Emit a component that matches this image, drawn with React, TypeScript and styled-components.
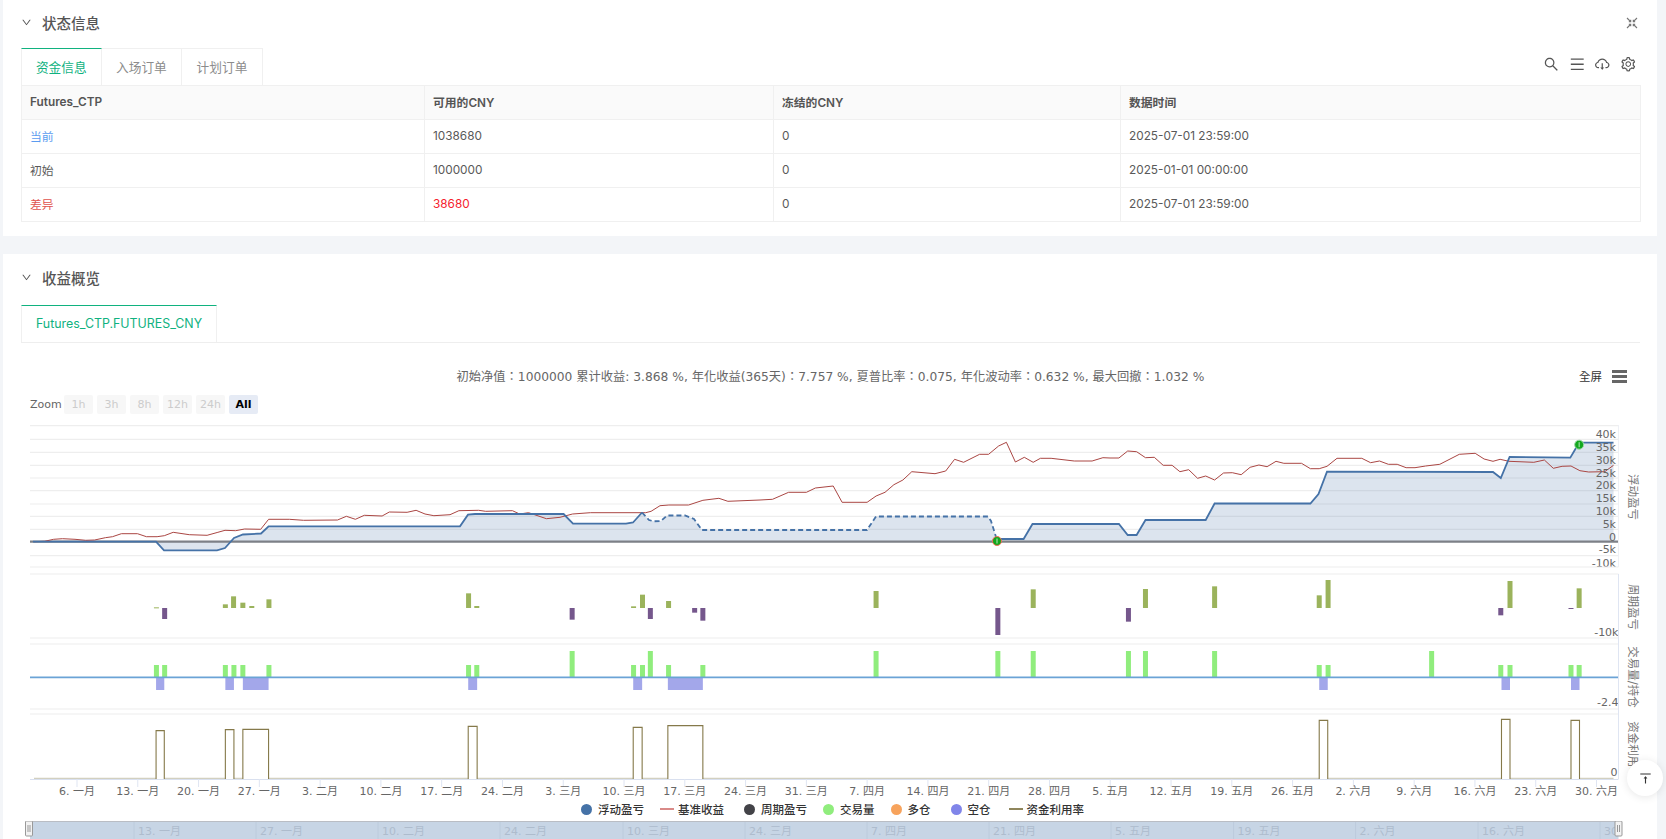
import styled, { createGlobalStyle } from 'styled-components';
import {
  AiOutlineCloudDownload,
  AiOutlineDown,
  AiOutlineMenu,
  AiOutlineSearch,
  AiOutlineSetting,
  AiOutlineVerticalAlignTop,
} from 'react-icons/ai';

const CHART_FONT = '"DejaVu Sans", "Noto Sans CJK SC", sans-serif';

const GlobalStyle = createGlobalStyle`
  html, body {
    margin: 0;
    height: 839px;
    overflow: hidden;
    background: #f3f5f8;
    font-family: Inter, "Noto Sans CJK SC", sans-serif;
    color: #555;
  }
`;

const Page = styled.div`
  display: flex;
  flex-direction: column;
  gap: 18px;
  padding: 0 9px 0 3px;
`;

const Panel = styled.section<{ $height: number }>`
  height: ${(p) => p.$height}px;
  background: #fff;
  padding: 0 17px 0 18px;
  overflow: hidden;
`;

const PanelHeader = styled.header<{ $height: number; $pad: number }>`
  height: ${(p) => p.$height}px;
  display: flex;
  align-items: center;
  padding-bottom: ${(p) => p.$pad}px;
  box-sizing: border-box;
`;

const Chevron = styled(AiOutlineDown)`
  font-size: 11px;
  color: #555;
  margin: 0 10px 0 0;
`;

const PanelTitle = styled.h2`
  margin: 0;
  font-size: 14.5px;
  font-weight: 500;
  color: #555;
  flex: 1;
`;

const TabRow = styled.div<{ $line?: boolean }>`
  display: flex;
  align-items: stretch;
  height: 37px;
  box-sizing: border-box;
  ${(p) => p.$line && 'border-bottom: 1px solid #eee; height: 38px;'}
`;

const Tab = styled.div<{ $active?: boolean; $wide?: boolean }>`
  width: ${(p) => (p.$wide ? 196 : 80.6)}px;
  box-sizing: border-box;
  display: flex;
  align-items: center;
  justify-content: center;
  padding-bottom: 2px;
  font-size: ${(p) => (p.$wide ? 12.4 : 12.7)}px;
  color: ${(p) => (p.$active ? '#10b27f' : '#8c8c8c')};
  border: 1px solid #f0f0f0;
  border-left-width: ${(p) => (p.$active ? 1 : 0)}px;
  border-bottom: 0;
  border-top: ${(p) => (p.$active ? '1px solid #10b27f' : '1px solid #f0f0f0')};
`;

const TabTools = styled.div`
  margin-left: auto;
  display: flex;
  align-items: center;
  gap: 9px;
  padding: 0 4px 5px 0;
  font-size: 16.5px;
  color: #555;
`;

const Table = styled.table`
  width: 1619px;
  border-collapse: collapse;
  table-layout: fixed;
  font-size: 11.8px;
  color: #595959;
`;

const Th = styled.th<{ $width: number }>`
  width: ${(p) => p.$width}px;
  height: 34px;
  padding: 0 8px 2px;
  box-sizing: border-box;
  background: #fafafa;
  border: 1px solid #f0f0f0;
  text-align: left;
  font-weight: 600;
  color: #555;
`;

const Td = styled.td<{ $tone?: string }>`
  height: 34px;
  padding: 0 8px 2px;
  box-sizing: border-box;
  border: 1px solid #f0f0f0;
  color: ${(p) => p.$tone ?? '#595959'};
`;

const CornerTool = styled.span`
  display: flex;
  margin-right: 2px;
`;

const ChartTop = styled.div`
  position: relative;
  height: 50px;
  display: flex;
  align-items: center;
  justify-content: center;
  padding-top: 16px;
  box-sizing: border-box;
  font-family: "DejaVu Sans", "Noto Sans CJK TC", sans-serif;
  font-size: 12.25px;
  color: #666;
  white-space: nowrap;
`;

const FullButton = styled.div`
  position: absolute;
  right: 13px;
  top: 25px;
  display: flex;
  align-items: center;
  gap: 10px;
  font-size: 11.5px;
  color: #333;
`;

const Hamburger = styled.span`
  display: flex;
  flex-direction: column;
  gap: 2px;
  width: 15px;
  & > i {
    height: 3px;
    background: #666;
  }
`;

const RangeRow = styled.div`
  height: 27px;
  display: flex;
  align-items: center;
  gap: 4px;
  padding: 0 0 4px 9px;
  box-sizing: border-box;
  font-family: ${CHART_FONT};
  font-size: 11px;
  color: #666;
`;

const RangeLabel = styled.span`
  width: 30px;
`;

const RangeButton = styled.span<{ $active?: boolean }>`
  width: 29px;
  height: 19px;
  display: flex;
  align-items: center;
  justify-content: center;
  background: ${(p) => (p.$active ? '#e6ebf5' : '#f7f7f7')};
  color: ${(p) => (p.$active ? '#000' : '#ccc')};
  font-weight: ${(p) => (p.$active ? 600 : 400)};
  border-radius: 2px;
`;

const Plot = styled.svg`
  display: block;
  width: 1619px;
  height: 380px;
  font-family: ${CHART_FONT};
`;

const Legend = styled.div`
  height: 21px;
  display: flex;
  align-items: center;
  padding: 0 0 3px 560px;
  box-sizing: border-box;
  font-size: 11.5px;
  font-weight: 500;
  color: #333;
`;

const LegendItem = styled.span<{ $gap: number }>`
  display: flex;
  align-items: center;
  gap: 6px;
  margin-right: ${(p) => p.$gap}px;
`;

const LegendDot = styled.i<{ $color: string }>`
  width: 11px;
  height: 11px;
  border-radius: 50%;
  background: ${(p) => p.$color};
`;

const LegendLine = styled.i<{ $color: string }>`
  width: 14px;
  height: 1.5px;
  margin-right: -2px;
  background: ${(p) => p.$color};
`;

const Navigator = styled.svg`
  display: block;
  width: 1619px;
  height: 18px;
  font-family: ${CHART_FONT};
`;

const BackTop = styled.button`
  position: fixed;
  left: 1627px;
  top: 760px;
  width: 36px;
  height: 36px;
  border: 0;
  padding: 0;
  border-radius: 50%;
  background: #fff;
  box-shadow: 0 1px 8px rgba(0, 0, 0, 0.1);
  display: flex;
  align-items: center;
  justify-content: center;
  font-size: 15px;
  color: #333;
`;

const FullscreenIcon = () => (
  <svg width="12" height="12" viewBox="0 0 12 12" fill="none" stroke="#777" strokeWidth="1.1">
    <path d="M1 1 L4.5 4.5 M2.8 4.7 H4.7 V2.8" />
    <path d="M11 1 L7.5 4.5 M7.3 2.8 V4.7 H9.2" />
    <path d="M1 11 L4.5 7.5 M2.8 7.3 H4.7 V9.2" />
    <path d="M11 11 L7.5 7.5 M9.2 7.3 H7.3 V9.2" />
  </svg>
);

// zoom crops were read at 2.8x across (2.82x for the right hand ones) and 3x down
type Raw = [number, number][];
const crop = (ox: number, oy: number, sx = 2.8) => (pts: Raw): Raw =>
  pts.map(([x, y]) => [ox + x / sx, oy + y / 3]);
const cropRight = (oy: number) => crop(1110, oy, 2.82);
const rightX = (x: number) => 1110 + x / 2.82;
const path = (pts: Raw) => pts.map(([x, y], i) => `${i ? 'L' : 'M'}${x.toFixed(1)} ${y.toFixed(1)}`).join(' ');

const ZERO = 541.7;
const RIGHT = 1618.5;
const LINE_END = rightX(1420);

const solidA: Raw = [
  [33, ZERO], [156, ZERO], [164, 550.3], [217, 550.3], [225, 548], [234, 538], [243, 534.5], [261, 533.5],
  [268.6, 526.3], [460, 526.3], [468, 514.7], [475, 514], [563.6, 514], [573, 523.7], [626, 523.7], [633, 522.5], [642, 512.5],
];
const dashed: Raw = [
  [642, 512.5], [649, 520], [653.6, 521.3], [661, 521], [667, 515.5], [685, 515.5], [694, 519], [702, 530],
  [867, 530], [876, 516.5], [988, 516.5], [991, 521], [997, 540],
];
const solidB: Raw = [
  [997, 539], [1023.6, 539], [1032.5, 524],
  ...cropRight(340)([
    [25, 552], [50, 585], [75, 585], [100, 540], [270, 540], [295, 490.5], [565, 490.5], [588, 462], [612, 395],
    [1080, 396], [1102, 414], [1127, 351], [1298, 353], [1323, 308], [1420, 308],
  ]),
];
const equity = [...solidA, ...dashed, ...solidB];

const benchmark: Raw = [
  ...crop(0, 360)([
    [95, 545], [125, 544], [150, 538], [175, 536], [210, 538], [240, 541], [265, 540], [295, 533], [315, 530], [340, 521],
    [385, 521], [410, 530], [440, 530], [460, 527], [485, 517], [530, 524], [580, 526], [610, 517], [630, 511], [660, 512],
    [685, 507], [730, 508], [752, 478], [810, 478], [850, 481], [945, 480], [970, 469], [995, 478], [1020, 466], [1070, 468],
    [1090, 456], [1140, 457], [1165, 451], [1190, 462], [1215, 467], [1260, 464], [1285, 452], [1340, 451], [1360, 454],
    [1435, 452], [1455, 462], [1480, 458], [1530, 476],
  ]),
  ...crop(560, 340)([
    [0, 532], [35, 522], [85, 518], [240, 518], [255, 514], [280, 497], [305, 495], [360, 495], [400, 481], [445, 475], [470, 484],
    [560, 480], [595, 478], [640, 457], [690, 457], [715, 444], [765, 438], [790, 487], [860, 487], [885, 468], [910, 457],
    [935, 434], [960, 420], [985, 395], [1050, 401], [1080, 393], [1105, 358], [1130, 367], [1175, 343], [1200, 343], [1228, 318],
    [1250, 307], [1275, 366], [1300, 352], [1325, 367], [1345, 355], [1375, 355], [1440, 363], [1490, 363], [1520, 353],
  ]),
  ...cropRight(340)([
    [0, 354], [25, 354], [50, 333], [75, 335], [100, 353], [125, 352], [150, 376], [175, 376], [197, 395], [222, 389], [247, 415],
    [270, 408], [295, 420], [320, 399], [345, 398], [370, 404], [395, 382], [420, 375], [443, 380], [468, 364], [490, 370], [540, 370],
    [565, 386], [590, 386], [612, 379], [640, 355], [710, 355], [735, 368], [760, 363], [785, 373], [810, 373], [835, 383], [860, 383],
    [890, 378], [930, 373], [985, 343], [1030, 340], [1055, 357], [1080, 364], [1100, 358], [1125, 364], [1195, 367], [1225, 360],
    [1250, 385], [1275, 379], [1300, 378], [1325, 392], [1350, 396], [1395, 395], [1420, 376],
  ]),
];

const gridY = [425.7, 439.3, 452.3, 465.3, 478, 490.7, 504, 516.3, 529.3, 555.7];
const yLabels: [string, number][] = [
  ['40k', 434.5], ['35k', 447.7], ['30k', 460.5], ['25k', 473.5], ['20k', 486.2], ['15k', 499],
  ['10k', 511.8], ['5k', 524.6], ['0', 537.5], ['-5k', 550.3], ['-10k', 564],
];

// [x, crop y] of the period profit bars
const profitBars: Raw = [
  ...crop(0, 560)([[438, 142], [461, 177], [631, 133], [654, 109], [680, 128], [705, 138], [753, 118], [1312, 100], [1335, 138]]),
  ...crop(560, 560)([[34, 179], [206, 139], [231, 104], [253, 177], [304, 123], [377, 158], [400, 182], [885, 93], [1226, 225], [1325, 88]]),
  ...cropRight(560)([[52, 185], [100, 87], [295, 79], [590, 106], [615, 60], [1102, 166], [1128, 63], [1300, 147], [1323, 85]]),
];

const tradeBars: [number, boolean][] = [
  ...[438, 461, 631, 655, 680, 753, 1312, 1335].map((x): [number, boolean] => [x / 2.8, false]),
  ...[[34, 1], [206, 0], [231, 0], [253, 1], [304, 0], [400, 0], [885, 1], [1226, 1], [1325, 1]].map(
    ([x, t]): [number, boolean] => [560 + x / 2.8, !!t],
  ),
  ...[[52, 1], [100, 1], [295, 1], [590, 0], [615, 0], [907, 1], [1102, 0], [1128, 0], [1300, 0], [1323, 0]].map(
    ([x, t]): [number, boolean] => [rightX(x), !!t],
  ),
];

// left and right of the short position blocks, the usage pulses sit on the same spans
const blocks: [number, number][] = [
  [437 / 2.8, 460 / 2.8], [631 / 2.8, 655 / 2.8], [680 / 2.8, 752 / 2.8], [1311 / 2.8, 1336 / 2.8],
  [560 + 205 / 2.8, 560 + 230 / 2.8], [560 + 302 / 2.8, 560 + 400 / 2.8],
  [rightX(590), rightX(614)], [rightX(1104), rightX(1128)], [rightX(1300), rightX(1324)],
];
const usageTops = [512, 509, 508, 499, 502, 497, 481, 478, 481];

const months = ['一月', '二月', '三月', '四月', '五月', '六月'];
const xTicks: [string, number][] = (
  [
    [6, 0], [13, 0], [20, 0], [27, 0], [3, 1], [10, 1], [17, 1], [24, 1], [3, 2], [10, 2], [17, 2], [24, 2], [31, 2],
    [7, 3], [14, 3], [21, 3], [28, 3], [5, 4], [12, 4], [19, 4], [26, 4], [2, 5], [9, 5], [16, 5], [23, 5], [30, 5],
  ] as [number, number][]
).map(([d, m], i) => [`${d}. ${months[m]}`, 77 + i * 60.78]);

const navLabels: [string, number][] = [
  ['13. 一月', 138], ['27. 一月', 260], ['10. 二月', 382], ['24. 二月', 504], ['10. 三月', 627], ['24. 三月', 749],
  ['7. 四月', 871], ['21. 四月', 993], ['5. 五月', 1115], ['19. 五月', 1237.6], ['2. 六月', 1359.6], ['16. 六月', 1482], ['30', 1604],
];

const rows: { name: string; tone?: string; cash: string; cashTone?: string; time: string }[] = [
  { name: '当前', tone: '#5b9cf0', cash: '1038680', time: '2025-07-01 23:59:00' },
  { name: '初始', cash: '1000000', time: '2025-01-01 00:00:00' },
  { name: '差异', tone: '#e0524d', cash: '38680', cashTone: '#f5222d', time: '2025-07-01 23:59:00' },
];

const Flag = ({ x, y, ring }: { x: number; y: number; ring: string }) => (
  <g>
    <circle cx={x} cy={y} r={4.5} fill="#12a81e" stroke={ring} strokeWidth={1} />
    <path d={`M${x} ${y - 2.5} V${y + 2.5}`} stroke="#cfeecf" strokeWidth={0.9} />
  </g>
);

const AxisTitle = ({ y, children }: { y: number; children: string }) => (
  <text x={1632} y={y} transform={`rotate(90 1632 ${y})`} textAnchor="middle" dominantBaseline="middle" fontSize={11.5} fill="#777">
    {children}
  </text>
);

const Handle = ({ x }: { x: number }) => (
  <g>
    <rect x={x - 3.5} y={821} width={7} height={15} rx={1} fill="#f2f2f2" stroke="#999" />
    <path d={`M${x - 1} 825 V832 M${x + 1} 825 V832`} stroke="#999" />
  </g>
);

const App = () => {
  return (
    <>
      <GlobalStyle />
      <Page>
        <Panel $height={236}>
          <PanelHeader $height={48} $pad={3}>
            <Chevron />
            <PanelTitle>状态信息</PanelTitle>
            <CornerTool>
              <FullscreenIcon />
            </CornerTool>
          </PanelHeader>
          <TabRow>
            <Tab $active>资金信息</Tab>
            <Tab>入场订单</Tab>
            <Tab>计划订单</Tab>
            <TabTools>
              <AiOutlineSearch />
              <AiOutlineMenu />
              <AiOutlineCloudDownload />
              <AiOutlineSetting />
            </TabTools>
          </TabRow>
          <Table>
            <thead>
              <tr>
                <Th $width={403}>Futures_CTP</Th>
                <Th $width={349}>可用的CNY</Th>
                <Th $width={347}>冻结的CNY</Th>
                <Th $width={520}>数据时间</Th>
              </tr>
            </thead>
            <tbody>
              {rows.map((r) => (
                <tr key={r.name}>
                  <Td $tone={r.tone}>{r.name}</Td>
                  <Td $tone={r.cashTone}>{r.cash}</Td>
                  <Td>0</Td>
                  <Td>{r.time}</Td>
                </tr>
              ))}
            </tbody>
          </Table>
        </Panel>
        <Panel $height={585}>
          <PanelHeader $height={51} $pad={5}>
            <Chevron />
            <PanelTitle>收益概览</PanelTitle>
          </PanelHeader>
          <TabRow $line>
            <Tab $active $wide>
              Futures_CTP.FUTURES_CNY
            </Tab>
          </TabRow>
          <ChartTop>
            初始净值：1000000 累计收益: 3.868 %, 年化收益(365天)：7.757 %, 夏普比率：0.075, 年化波动率：0.632 %, 最大回撤：1.032 %
            <FullButton>
              全屏
              <Hamburger>
                <i />
                <i />
                <i />
              </Hamburger>
            </FullButton>
          </ChartTop>
          <RangeRow>
            <RangeLabel>Zoom</RangeLabel>
            {['1h', '3h', '8h', '12h', '24h'].map((r) => (
              <RangeButton key={r}>{r}</RangeButton>
            ))}
            <RangeButton $active>All</RangeButton>
          </RangeRow>
          <Plot viewBox="21 420 1619 380">
            {gridY.map((y) => (
              <line key={y} x1={30} x2={RIGHT} y1={y} y2={y} stroke="#eeeeee" strokeWidth={1.2} />
            ))}
            <path d={`${path(equity)} L${LINE_END} ${ZERO} L33 ${ZERO} Z`} fill="#4572a7" fillOpacity={0.19} />
            <line x1={30} x2={RIGHT} y1={ZERO} y2={ZERO} stroke="#7d8087" strokeWidth={2.2} />
            <path d={path(benchmark)} fill="none" stroke="#aa4643" strokeWidth={1} />
            <path d={path(solidA)} fill="none" stroke="#4572a7" strokeWidth={1.8} />
            <path d={path(dashed)} fill="none" stroke="#4572a7" strokeWidth={1.8} strokeDasharray="5 3" />
            <path d={path(solidB)} fill="none" stroke="#4572a7" strokeWidth={1.8} />
            <Flag x={997} y={541} ring="#f0705a" />
            <Flag x={rightX(1323)} y={444.7} ring="#9ed8a8" />
            {yLabels.map(([t, y]) => (
              <text key={t} x={1616} y={y} textAnchor="end" dominantBaseline="middle" fontSize={11} fill="#666">
                {t}
              </text>
            ))}
            <line x1={RIGHT} x2={RIGHT} y1={425} y2={567} stroke="#eef0f5" />

            <line x1={30} x2={RIGHT} y1={567} y2={567} stroke="#eeeeee" strokeWidth={1.2} />
            <line x1={30} x2={RIGHT} y1={574} y2={574} stroke="#eeeeee" strokeWidth={1.2} />
            {profitBars.map(([x, y]) => {
              const up = y < 608;
              return (
                <rect
                  key={x}
                  x={x - 2.5}
                  width={5}
                  y={up ? y : 608}
                  height={Math.max(Math.abs(y - 608), 1)}
                  fill={up ? '#9bb35c' : '#75578c'}
                />
              );
            })}
            <text x={RIGHT} y={633} textAnchor="end" dominantBaseline="middle" fontSize={11} fill="#666">
              -10k
            </text>
            <line x1={30} x2={RIGHT} y1={638} y2={638} stroke="#eeeeee" strokeWidth={1.2} />
            <line x1={30} x2={RIGHT} y1={644} y2={644} stroke="#eeeeee" strokeWidth={1.2} />
            {tradeBars.map(([x, tall]) => (
              <rect key={x} x={x - 2.5} width={5} y={tall ? 651 : 665} height={tall ? 26 : 12} fill="#90ed7d" />
            ))}
            {blocks.map(([a, b]) => (
              <rect key={a} x={a} width={b - a} y={677} height={13} fill="#a3a7ea" />
            ))}
            <line x1={30} x2={RIGHT} y1={677.3} y2={677.3} stroke="#6ba3d6" strokeWidth={1.8} />
            <text x={RIGHT} y={703} textAnchor="end" dominantBaseline="middle" fontSize={11} fill="#666">
              -2.4
            </text>
            <line x1={30} x2={RIGHT} y1={709} y2={709} stroke="#eeeeee" strokeWidth={1.2} />
            <line x1={30} x2={RIGHT} y1={714} y2={714} stroke="#eeeeee" strokeWidth={1.2} />
            <line x1={34} x2={LINE_END} y1={778.5} y2={778.5} stroke="#d2d0c0" strokeWidth={1.6} />
            {blocks.map(([a, b], i) => {
              const top = 560 + usageTops[i] / 3;
              return (
                <path key={a} d={`M${a} 779 V${top} H${b} V779`} fill="#fff" stroke="#85794a" strokeWidth={1.1} />
              );
            })}
            <text x={RIGHT - 1} y={773} textAnchor="end" dominantBaseline="middle" fontSize={11} fill="#666">
              0
            </text>
            <line x1={RIGHT} x2={RIGHT} y1={574} y2={779} stroke="#dfe5f2" />
            <line x1={30} x2={RIGHT} y1={779.5} y2={779.5} stroke="#d9e0ef" />
            {xTicks.map(([t, x]) => (
              <g key={t}>
                <line x1={x} x2={x} y1={779} y2={787} stroke="#dfe5f2" />
                <text x={x} y={792} textAnchor="middle" dominantBaseline="middle" fontSize={11} fill="#666">
                  {t}
                </text>
              </g>
            ))}
            <AxisTitle y={497}>浮动盈亏</AxisTitle>
            <AxisTitle y={607}>周期盈亏</AxisTitle>
            <AxisTitle y={677}>交易量/持仓</AxisTitle>
            <clipPath id="usage-title">
              <rect x={1622} y={714} width={20} height={56} />
            </clipPath>
            <g clipPath="url(#usage-title)">
              <AxisTitle y={750}>资金利用率</AxisTitle>
            </g>
          </Plot>
          <Legend>
            <LegendItem $gap={16}>
              <LegendDot $color="#4572a7" />
              浮动盈亏
            </LegendItem>
            <LegendItem $gap={20}>
              <LegendLine $color="#d98a88" />
              基准收益
            </LegendItem>
            <LegendItem $gap={16}>
              <LegendDot $color="#434348" />
              周期盈亏
            </LegendItem>
            <LegendItem $gap={16}>
              <LegendDot $color="#90ed7d" />
              交易量
            </LegendItem>
            <LegendItem $gap={20}>
              <LegendDot $color="#f7a35c" />
              多仓
            </LegendItem>
            <LegendItem $gap={18}>
              <LegendDot $color="#8085e9" />
              空仓
            </LegendItem>
            <LegendItem $gap={0}>
              <LegendLine $color="#8f865c" />
              资金利用率
            </LegendItem>
          </Legend>
          <Navigator viewBox="21 821 1619 18">
            <rect x={30} y={821} width={RIGHT - 30} height={18} fill="#c7d5e5" />
            <line x1={30} x2={RIGHT} y1={821.5} y2={821.5} stroke="#b9bdc4" />
            {navLabels.map(([t, x]) => (
              <g key={x}>
                <line x1={x - 4} x2={x - 4} y1={822} y2={839} stroke="#bccbdc" />
                <text x={x} y={831.7} dominantBaseline="middle" fontSize={11} fill="#aebccd">
                  {t}
                </text>
              </g>
            ))}
            <Handle x={29} />
            <Handle x={RIGHT} />
          </Navigator>
        </Panel>
      </Page>
      <BackTop>
        <AiOutlineVerticalAlignTop />
      </BackTop>
    </>
  );
};

export default App;
